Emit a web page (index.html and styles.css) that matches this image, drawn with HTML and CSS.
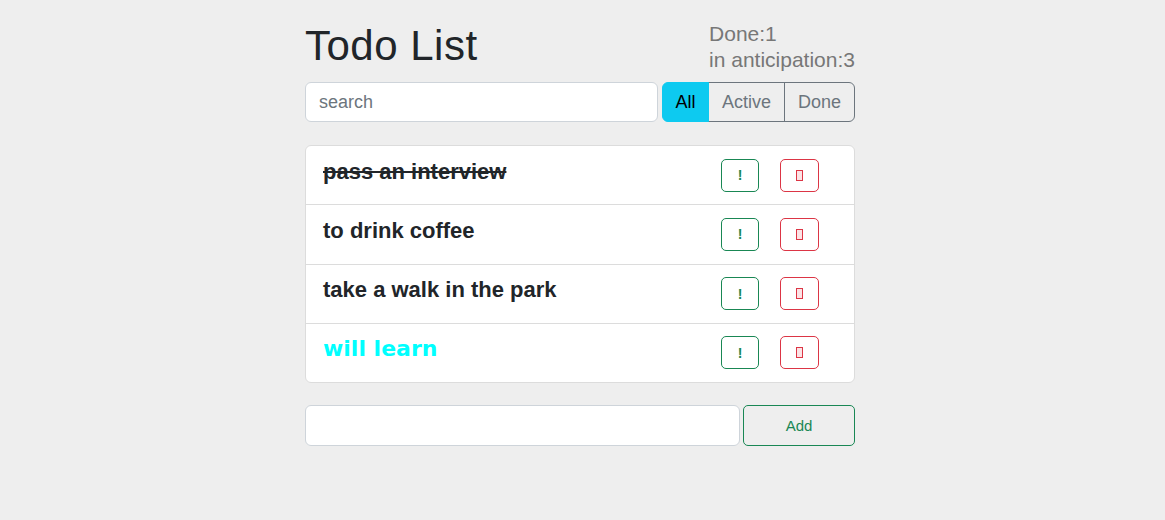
FILE: index.html
```html
<!DOCTYPE html>
<html lang="en">
<head>
<meta charset="utf-8">
<title>Todo List</title>
<link rel="stylesheet" href="styles.css">
</head>
<body>
<div class="app">
  <header class="header">
    <h1 class="title">Todo List</h1>
    <div class="status">
      <div>Done:1</div>
      <div>in anticipation:3</div>
    </div>
  </header>
  <div class="search-row">
    <input class="search" type="text" placeholder="search">
    <div class="filters">
      <button class="filter filter-all active-filter">All</button>
      <button class="filter filter-active">Active</button>
      <button class="filter filter-done">Done</button>
    </div>
  </div>
  <ul class="list">
    <li class="item">
      <span class="label done">pass an interview</span>
      <div class="actions">
        <button class="btn btn-imp">!</button>
        <button class="btn btn-del"><span class="tofu"></span></button>
      </div>
    </li>
    <li class="item">
      <span class="label">to drink coffee</span>
      <div class="actions">
        <button class="btn btn-imp">!</button>
        <button class="btn btn-del"><span class="tofu"></span></button>
      </div>
    </li>
    <li class="item">
      <span class="label">take a walk in the park</span>
      <div class="actions">
        <button class="btn btn-imp">!</button>
        <button class="btn btn-del"><span class="tofu"></span></button>
      </div>
    </li>
    <li class="item">
      <span class="label important">will learn</span>
      <div class="actions">
        <button class="btn btn-imp">!</button>
        <button class="btn btn-del"><span class="tofu"></span></button>
      </div>
    </li>
  </ul>
  <form class="add-row">
    <input class="add-input" type="text">
    <button class="add-btn" type="button">Add</button>
  </form>
</div>
</body>
</html>
```
FILE: styles.css
```css
* { box-sizing: border-box; }
html, body { margin: 0; padding: 0; }
body {
  background: #eeeeee;
  font-family: "Liberation Sans", Arial, sans-serif;
  color: #212529;
}
.app {
  width: 555px;
  padding-right: 5px;
  margin: 0 auto;
}
.header {
  display: flex;
  justify-content: space-between;
  align-items: flex-start;
  padding-top: 18px;
}
.title {
  margin: 4px 0 0;
  font-size: 42px;
  font-weight: 400;
  line-height: 48px;
  letter-spacing: 0.5px;
  color: #212529;
}
.status {
  margin-top: 3px;
  font-size: 21px;
  line-height: 26px;
  color: #777777;
}
.search-row {
  display: flex;
  gap: 4px;
  margin-top: 9px;
  height: 40px;
}
.search {
  flex: 1;
  height: 40px;
  border: 1px solid #ced4da;
  border-radius: 6px;
  background: #fff;
  padding: 0 13px;
  font-family: inherit;
  font-size: 18px;
  color: #212529;
  outline: none;
}
.search::placeholder { color: #6c757d; }
.filters {
  display: flex;
  width: 193px;
}
.filter {
  height: 40px;
  padding: 0;
  font-family: inherit;
  font-size: 18px;
  color: #6c757d;
  background: transparent;
  border: 1px solid #6c757d;
  margin-left: -1px;
  border-radius: 0;
  text-align: center;
}
.filter-all { width: 47px; margin-left: 0; border-radius: 6px 0 0 6px; }
.filter-active { width: 77px; }
.filter-done { width: 71px; border-radius: 0 6px 6px 0; }
.active-filter {
  background: #0dcaf0;
  border-color: #0dcaf0;
  color: #000;
  position: relative;
  z-index: 1;
}
.list {
  list-style: none;
  margin: 23px 0 0;
  padding: 0;
  background: #fff;
  border: 1px solid #dcdcdc;
  border-radius: 6px;
}
.item {
  display: flex;
  align-items: flex-start;
  padding: 12.5px 35px 12.75px 17px;
  border-top: 1px solid #dcdcdc;
}
.item:first-child { border-top: 0; }
.label {
  flex: 1;
  font-size: 22px;
  font-weight: 700;
  line-height: normal;
  color: #212529;
}
.label.done { text-decoration: line-through; }
.label.important {
  color: #00ffff;
  font-family: "DejaVu Sans", sans-serif;
  font-size: 22px;
}
.actions {
  display: flex;
  gap: 21px;
}
.btn {
  width: 38px;
  height: 33px;
  background: transparent;
  border-radius: 5px;
  display: flex;
  align-items: center;
  justify-content: center;
  padding: 0;
  font-family: inherit;
}
.btn-imp {
  border: 1px solid #198754;
  color: #198754;
  font-size: 14px;
  font-weight: 700;
}
.btn-del {
  width: 39px;
  border: 1px solid #dc3545;
}
.tofu {
  display: block;
  width: 7px;
  height: 11px;
  border: 1px solid #dc3545;
  background: #fbe3e5;
}
.add-row {
  display: flex;
  gap: 3px;
  margin: 22px 0 0;
}
.add-input {
  flex: 1;
  height: 41px;
  border: 1px solid #ced4da;
  border-radius: 6px;
  background: #fff;
  outline: none;
}
.add-btn {
  width: 112px;
  height: 41px;
  border: 1px solid #198754;
  border-radius: 5px;
  background: transparent;
  color: #198754;
  font-family: inherit;
  font-size: 15px;
  padding-top: 1px;
}
```
